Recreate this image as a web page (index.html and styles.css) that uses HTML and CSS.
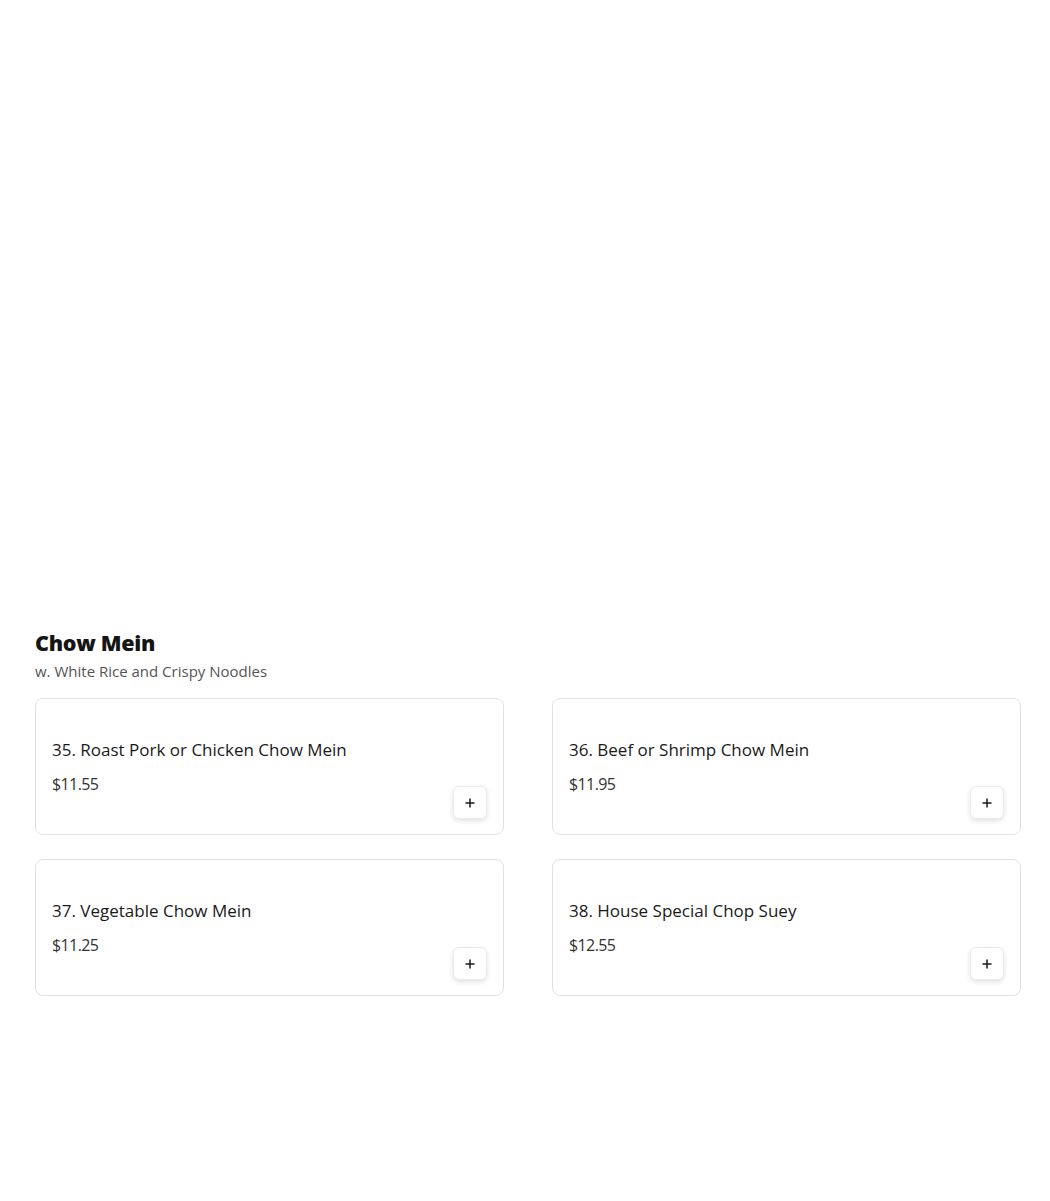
FILE: index.html
```html
<!DOCTYPE html>
<html>
<head>
<meta charset="utf-8">
<link rel="stylesheet" href="styles.css">
</head>
<body>
<main class="page">
  <section class="category">
    <h2 class="cat-title">Chow Mein</h2>
    <p class="cat-desc">w. White Rice and Crispy Noodles</p>
    <div class="grid">
      <div class="card">
        <div class="info">
          <div class="name">35. Roast Pork or Chicken Chow Mein</div>
          <div class="price">$11.55</div>
        </div>
        <button class="add" aria-label="Add"><svg width="12" height="12" viewBox="0 0 12 12"><path d="M6 1.5v9M1.5 6h9" stroke="#1a1a1a" stroke-width="1.5"/></svg></button>
      </div>
      <div class="card">
        <div class="info">
          <div class="name">36. Beef or Shrimp Chow Mein</div>
          <div class="price">$11.95</div>
        </div>
        <button class="add" aria-label="Add"><svg width="12" height="12" viewBox="0 0 12 12"><path d="M6 1.5v9M1.5 6h9" stroke="#1a1a1a" stroke-width="1.5"/></svg></button>
      </div>
      <div class="card">
        <div class="info">
          <div class="name">37. Vegetable Chow Mein</div>
          <div class="price">$11.25</div>
        </div>
        <button class="add" aria-label="Add"><svg width="12" height="12" viewBox="0 0 12 12"><path d="M6 1.5v9M1.5 6h9" stroke="#1a1a1a" stroke-width="1.5"/></svg></button>
      </div>
      <div class="card">
        <div class="info">
          <div class="name">38. House Special Chop Suey</div>
          <div class="price">$12.55</div>
        </div>
        <button class="add" aria-label="Add"><svg width="12" height="12" viewBox="0 0 12 12"><path d="M6 1.5v9M1.5 6h9" stroke="#1a1a1a" stroke-width="1.5"/></svg></button>
      </div>
    </div>
  </section>
</main>
</body>
</html>
```
FILE: styles.css
```css
html, body {
  margin: 0;
  padding: 0;
  background: #ffffff;
}
body {
  font-family: "Open Sans", "Liberation Sans", sans-serif;
  color: #1a1a1a;
}
.page {
  padding: 628px 29px 0 35px;
}
.cat-title {
  margin: 0;
  font-size: 21.5px;
  line-height: 30px;
  font-weight: 800;
  letter-spacing: -0.3px;
  color: #151515;
}
.cat-desc {
  margin: 3px 0 0;
  font-size: 15px;
  line-height: 20px;
  color: #555555;
}
.grid {
  margin-top: 17px;
  display: grid;
  grid-template-columns: 1fr 1fr;
  column-gap: 48px;
  row-gap: 24px;
}
.card {
  border: 1px solid #e2e2e2;
  border-radius: 8px;
  padding: 39px 16px 15px 16px;
  display: flex;
  justify-content: space-between;
  align-items: flex-end;
}
.info {
  padding-bottom: 23px;
}
.name {
  font-size: 17px;
  line-height: 24px;
  font-weight: 500;
  color: #1a1a1a;
}
.price {
  margin-top: 10px;
  font-size: 16px;
  line-height: 24px;
  letter-spacing: -0.6px;
  color: #333333;
}
.add {
  width: 34px;
  height: 33px;
  padding: 0;
  border: 1px solid #ececec;
  border-radius: 6px;
  background: #ffffff;
  box-shadow: 0 2px 5px rgba(0, 0, 0, 0.12);
  display: flex;
  align-items: center;
  justify-content: center;
}
```
